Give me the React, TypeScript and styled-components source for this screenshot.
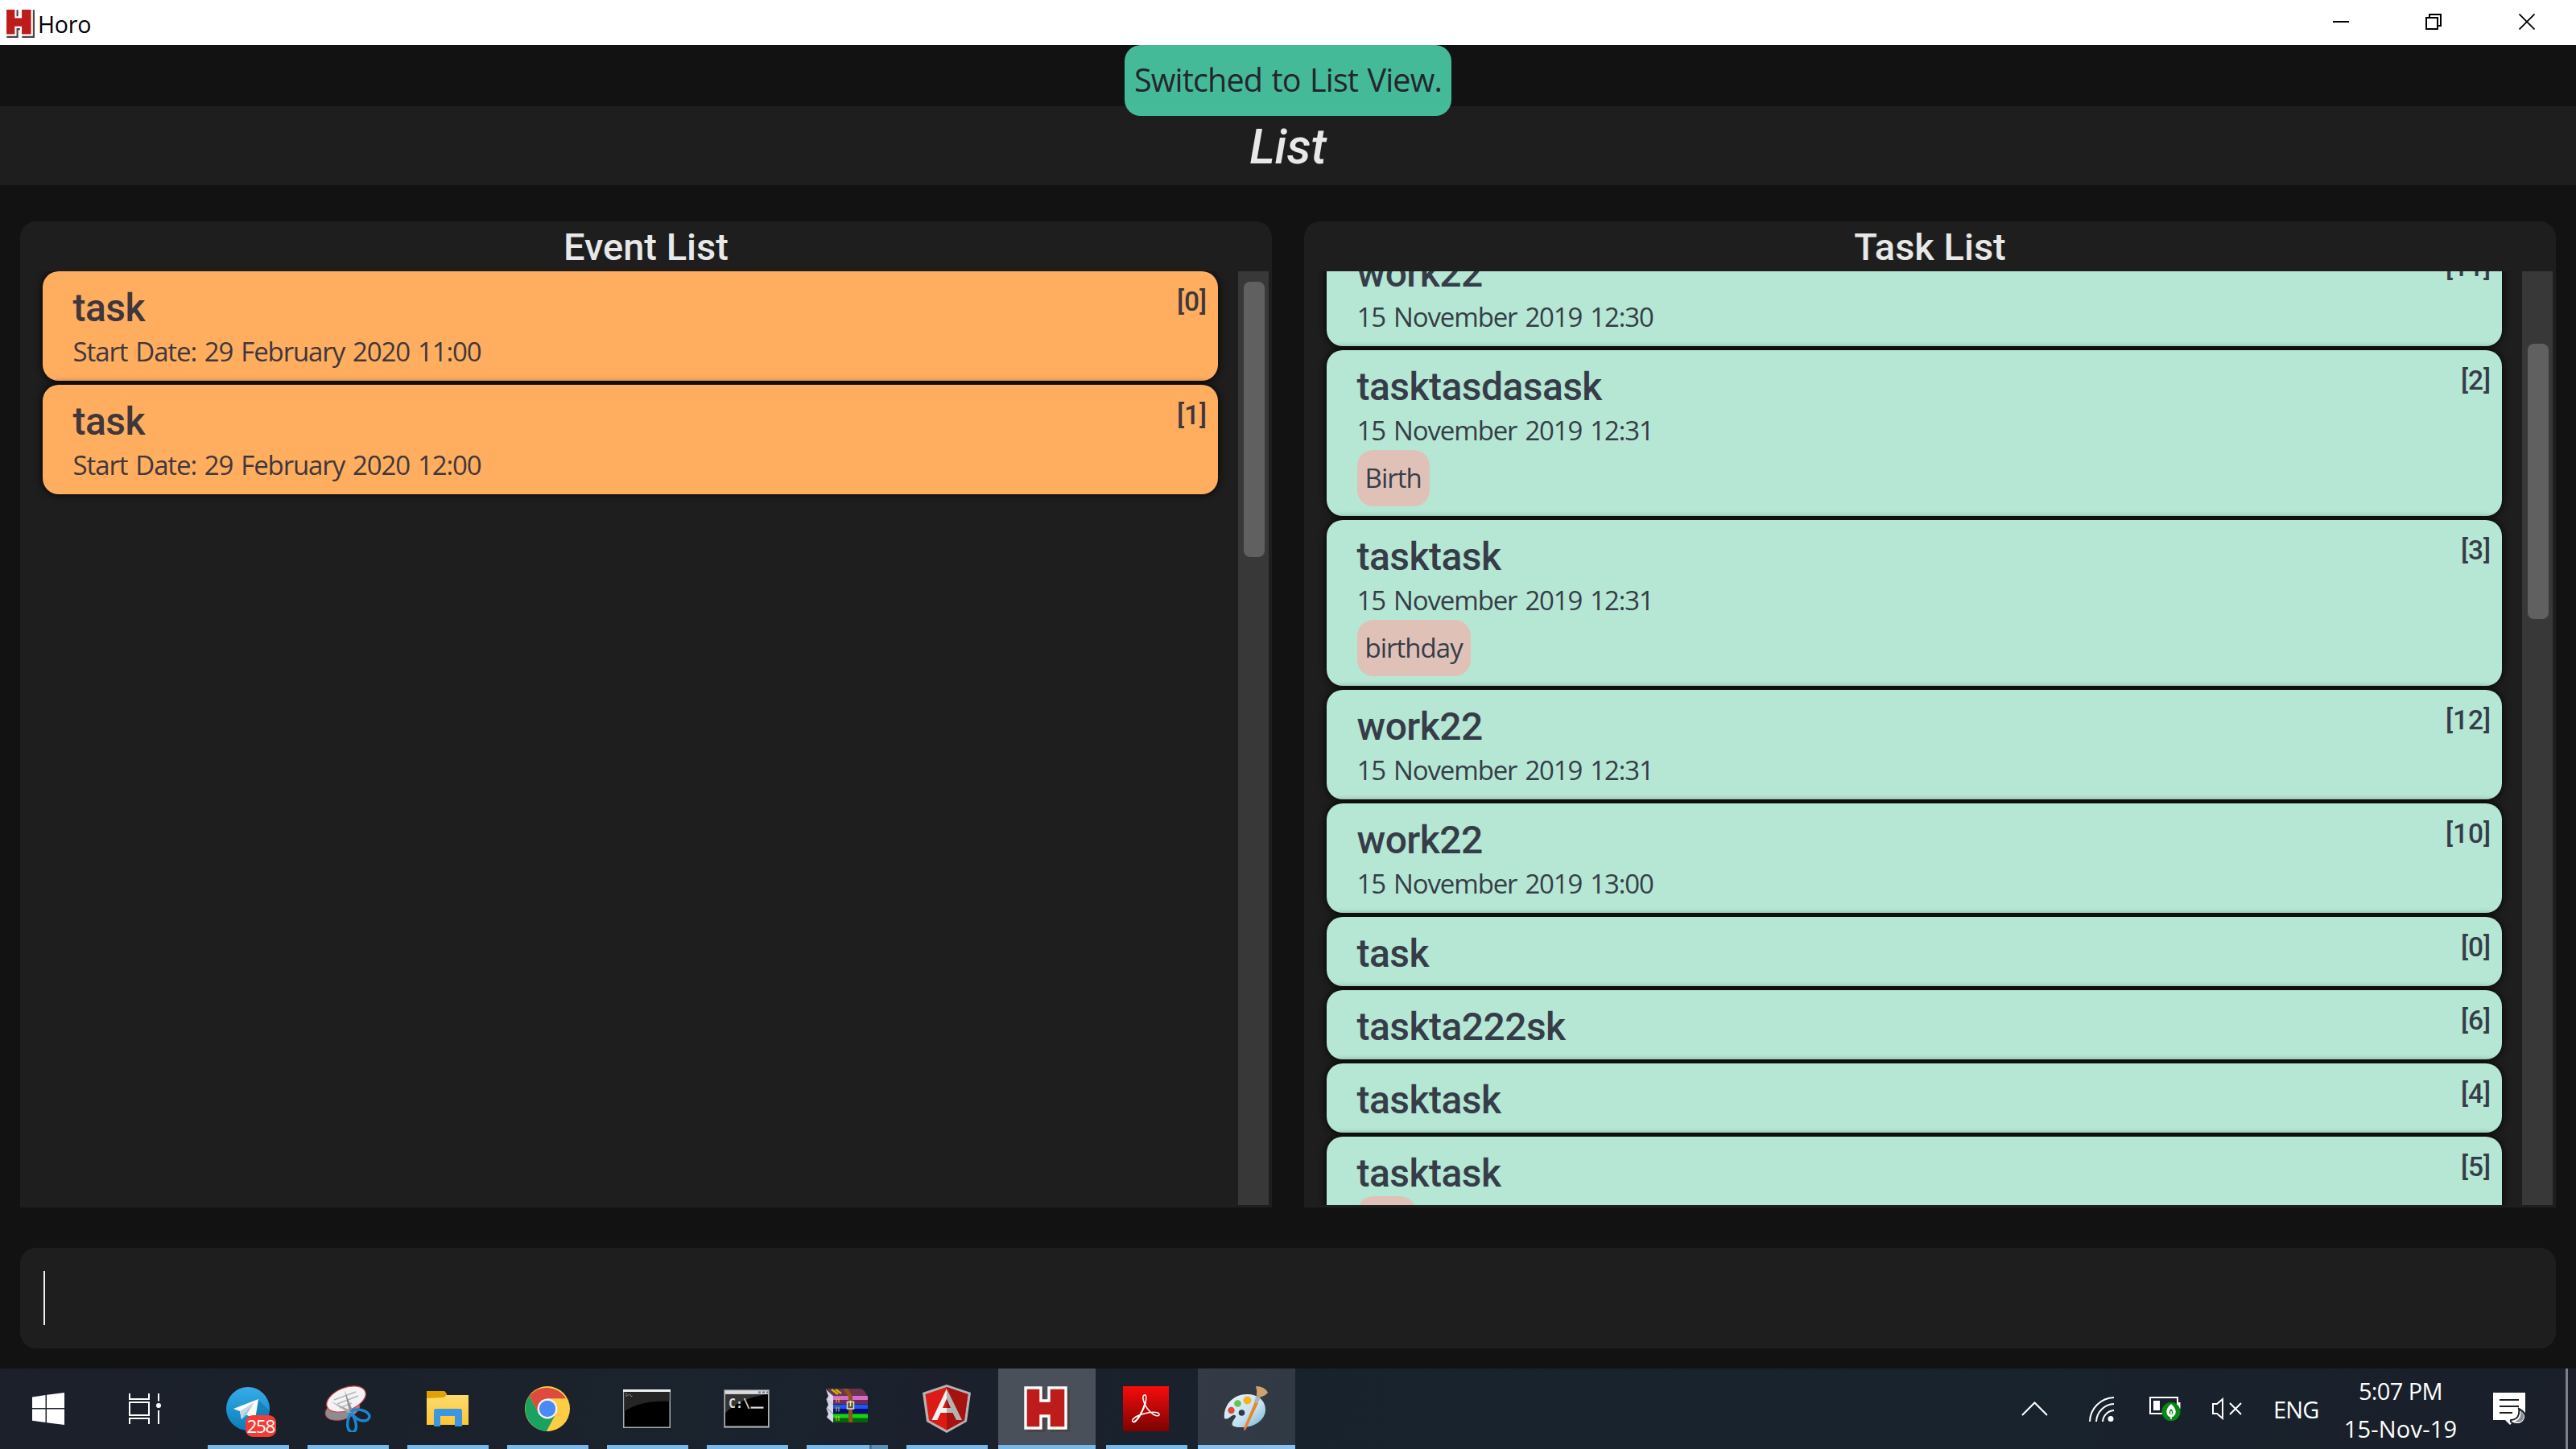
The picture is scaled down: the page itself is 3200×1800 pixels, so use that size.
import React from "react";
import styled, { createGlobalStyle } from "styled-components";

const ui = `"Open Sans", "Noto Sans", sans-serif`;
const heading = `Roboto, "Liberation Sans", sans-serif`;

const GlobalStyle = createGlobalStyle`
  html, body { margin: 0; padding: 0; background: #121212; }
  *, *::before, *::after { box-sizing: border-box; }
`;

const Screen = styled.div`
  width: 3200px;
  height: 1800px;
  display: flex;
  flex-direction: column;
  overflow: hidden;
  background: #121212;
  font-family: ${ui};
`;

const TitleBar = styled.header`
  position: relative;
  height: 56px;
  flex: none;
  display: flex;
  align-items: center;
  padding-left: 5px;
  background: #fff;
  color: #000;
`;

const AppName = styled.span`
  margin-left: 4px;
  padding-top: 3px;
  font-size: 28.5px;
  line-height: 40px;
  letter-spacing: -0.2px;
`;

const WindowButtons = styled.div`
  margin-left: auto;
  display: flex;
  height: 56px;
  padding: 0 2px 2px 0;
`;

const WindowButton = styled.span<{ $width: number }>`
  width: ${(p) => p.$width}px;
  display: flex;
  align-items: center;
  justify-content: center;
`;

const TopGap = styled.div`
  height: 76px;
  flex: none;
`;

const Toast = styled.div`
  position: absolute;
  top: 56px;
  left: 1397px;
  z-index: 2;
  width: 406px;
  height: 88px;
  border-radius: 20px;
  background: rgba(73, 199, 163, 0.93);
  color: #22262f;
  font-size: 39.5px;
  line-height: 87px;
  letter-spacing: -0.85px;
  word-spacing: 2px;
  text-align: center;
  white-space: nowrap;
`;

const ViewTitle = styled.h1`
  margin: 0;
  height: 98px;
  flex: none;
  background: #1e1e1e;
  color: #e8e8e8;
  font: italic 500 60px/101px ${heading};
  text-align: center;
`;

const Panels = styled.main`
  display: flex;
  gap: 40px;
  padding: 45px 25px 0;
`;

const Panel = styled.section`
  width: 1555px;
  height: 1225px;
  display: flex;
  flex-direction: column;
  border-radius: 20px 20px 0 0;
  background: #1e1e1e;
`;

const PanelTitle = styled.h2`
  margin: 0;
  height: 62px;
  flex: none;
  color: #e8e8e8;
  font: 500 47px/63px ${heading};
  text-align: center;
`;

const PanelBody = styled.div`
  height: 1160px;
  display: flex;
`;

const CardList = styled.div<{ $scrolled: boolean }>`
  width: 1513px;
  height: 1160px;
  padding-left: 27.6px;
  display: flex;
  flex-direction: column;
  gap: 5px;
  overflow: hidden;
  & > :first-child { margin-top: ${(p) => (p.$scrolled ? "-43px" : "0.4px")}; }
`;

const Card = styled.article<{ $tone: "event" | "task" }>`
  flex: none;
  width: 1460.6px;
  display: flex;
  justify-content: space-between;
  padding: 16px 14px 10px 38px;
  border-radius: 20px;
  background: ${(p) => (p.$tone === "event" ? "#ffae60" : "#b5e7d4")};
  color: ${(p) => (p.$tone === "event" ? "#3f373b" : "#363d48")};
  box-shadow: 0 0 10px 1px rgba(0, 0, 0, 0.75);
`;

const CardTitle = styled.h3`
  margin: 0;
  font: 500 48px/60px ${heading};
  letter-spacing: -0.55px;
`;

const CardDate = styled.p`
  margin: 0;
  height: 50px;
  font-size: 33px;
  line-height: 48px;
  letter-spacing: -1.13px;
  word-spacing: 2.5px;
`;

const Tag = styled.span`
  display: block;
  width: max-content;
  height: 70px;
  margin: -2px 0 2px;
  padding: 0 10px;
  border-radius: 20px;
  background: #e0c1b8;
  font-size: 33px;
  line-height: 70px;
  letter-spacing: -1px;
`;

const CardIndex = styled.span`
  margin-top: 2px;
  font: 500 33.5px/40px ${heading};
`;

const Track = styled.div<{ $offset: number }>`
  width: 38px;
  height: 1160px;
  padding: ${(p) => p.$offset}px 5px 0 7px;
  background: #383838;
`;

const Thumb = styled.div`
  height: 342px;
  border-radius: 8px;
  background: #606060;
`;

const CommandBox = styled.div`
  height: 125px;
  flex: none;
  margin: 50px 25px 25px;
  padding: 29px 29px;
  border-radius: 20px;
  background: #1e1e1e;
`;

const Caret = styled.div`
  width: 2px;
  height: 67px;
  background: #f0f0f0;
`;

const Taskbar = styled.footer`
  height: 100px;
  flex: none;
  display: flex;
  background: linear-gradient(100deg, #1b202a 0%, #1b212b 15%, #1a232d 30%, #1b202c 36%, #18222c 48%, #18232d 75%, #1a1f2a 100%);
  color: #fff;
`;

const SystemButton = styled.div<{ $width: number }>`
  width: ${(p) => p.$width}px;
  display: flex;
  align-items: center;
  justify-content: center;
`;

const Apps = styled.div`
  display: flex;
  gap: 3px;
  margin-left: 8px;
`;

const AppButton = styled.div<{ $bg?: string; $wide?: boolean; $line?: string }>`
  position: relative;
  width: 121px;
  height: 100px;
  display: flex;
  align-items: center;
  justify-content: center;
  padding-right: 2px;
  background: ${(p) => p.$bg ?? "transparent"};
  &::after {
    content: "";
    position: absolute;
    bottom: 0;
    left: ${(p) => (p.$wide ? 0 : 10)}px;
    right: ${(p) => (p.$wide ? 0 : 10)}px;
    height: 5px;
    background: ${(p) => p.$line ?? "#76b9ed"};
  }
`;

const Badge = styled.span`
  position: absolute;
  left: 56.5px;
  top: 57.5px;
  width: 38.5px;
  height: 27.5px;
  border-radius: 9px;
  background: #f33c36;
  color: #fff;
  font: 400 22.5px/28px ${ui};
  letter-spacing: -1.3px;
  text-align: center;
`;

const Prompt = styled.text`
  font: 700 15px "DejaVu Sans Mono", "Liberation Mono", monospace;
  fill: #dcdcdc;
`;

const Tray = styled.div`
  margin-left: auto;
  display: flex;
  align-items: center;
`;

const TrayIcon = styled.span<{ $before: number }>`
  display: flex;
  margin-left: ${(p) => p.$before}px;
`;

const Language = styled.span`
  width: 60px;
  margin-left: 39px;
  font-size: 29px;
  line-height: 40px;
  letter-spacing: -0.9px;
  padding-top: 2px;
`;

const Clock = styled.div`
  width: 152px;
  margin-left: 22px;
  padding-top: 2px;
  display: flex;
  flex-direction: column;
  align-items: center;
  font-size: 29px;
  line-height: 47px;
  white-space: nowrap;
`;

const ClockLine = styled.span<{ $spacing: number }>`
  letter-spacing: ${(p) => p.$spacing}px;
`;

const ShowDesktop = styled.div`
  width: 13px;
  height: 100px;
  margin-left: 48px;
  border-left: 3px solid #7b8187;
`;

function HoroLogo({ size, shadow }: { size: number; shadow: string }) {
  const h = "M3 3H22V19H32V3H53V53H32V38H22V53H3Z";
  return (
    <svg width={size} height={size} viewBox="0 0 58 58">
      <path d={h} transform="translate(3.5 3.5)" fill={shadow} stroke={shadow} strokeWidth="3" />
      <path d={h} fill="#be1b1b" stroke="#fff" strokeWidth="3.4" />
    </svg>
  );
}

function TelegramIcon() {
  return (
    <svg width="56" height="56" viewBox="0 0 56 56">
      <defs>
        <linearGradient id="tg" x1="0" y1="0" x2="0" y2="1">
          <stop offset="0" stopColor="#36ade8" />
          <stop offset="1" stopColor="#0a7dbb" />
        </linearGradient>
      </defs>
      <circle cx="28" cy="28" r="27" fill="url(#tg)" />
      <path d="M41 17L55 31Q53 45 42 51L27 36Z" fill="#0b74ad" opacity="0.55" />
      <path d="M10 28L41 16L37 41L25 35L20 41L18 31Z" fill="#fff" />
      <path d="M18 31L36 20L23 34L20 41Z" fill="#c3d9ea" />
      <path d="M23 34L36 20L26 36L20 41Z" fill="#a5c6df" />
    </svg>
  );
}

function SnipIcon() {
  return (
    <svg width="58" height="58" viewBox="0 0 58 58">
      <ellipse cx="22.5" cy="30" rx="22" ry="12" transform="rotate(-18 22.5 30)" fill="#8b8d92" stroke="#c74b4e" strokeWidth="1" />
      <ellipse cx="27" cy="17" rx="25.5" ry="14" transform="rotate(-22 27 17)" fill="#f3f3f5" stroke="#d0474c" strokeWidth="1.2" />
      <path d="M12 18L39 8M16 23L42 13M19 28L34 22" stroke="#b6b6ba" strokeWidth="1.4" />
      <path d="M8 20L35 32L33 36Z" fill="#a9abb2" />
      <path d="M25 6L35 31L31 33Z" fill="#8f9299" />
      <path d="M33 33C39 27 54 31 56 38C56 46 43 47 34 35C41 46 41 57 35 58C27 57 27 44 33 34" fill="none" stroke="#1a87d4" strokeWidth="3.4" />
    </svg>
  );
}

function FolderIcon() {
  return (
    <svg width="54" height="46" viewBox="0 0 54 46">
      <defs>
        <linearGradient id="fd" x1="0" y1="0" x2="0" y2="1">
          <stop offset="0" stopColor="#ffdc75" />
          <stop offset="1" stopColor="#fcc737" />
        </linearGradient>
      </defs>
      <path d="M1 9V2Q1 1 2 1H22Q24 1 26 6H53V43H1Z" fill="url(#fd)" />
      <path d="M1 10V2Q1 1 2 1H22Q24 1 26 5Q24 9 21 9Z" fill="#e3a005" />
      <path d="M10 45V26Q10 23 13 23H42Q45 23 45 26V45H36V32H18V45Z" fill="#3d97df" />
    </svg>
  );
}

function ChromeIcon() {
  return (
    <svg width="56" height="56" viewBox="0 0 56 56">
      <circle cx="28" cy="28" r="28" fill="#fdcd43" />
      <path d="M5.5 12A28 28 0 0 1 51.2 15.6H28L17.3 34.2Z" fill="#dc4b3e" />
      <path d="M5.5 12A28 28 0 0 0 27 56L38.7 34.2L17.3 34.2Z" fill="#1ba261" />
      <path d="M28 15.6H51.2A28 28 0 0 1 27 56L38.7 34.2Z" fill="#fdcd43" />
      <circle cx="28" cy="28" r="12.4" fill="#f3f3f3" />
      <circle cx="28" cy="28" r="10.2" fill="#4a8af4" />
    </svg>
  );
}

function ConsoleIcon({ large }: { large?: boolean }) {
  return large ? (
    <svg width="57" height="48" viewBox="0 0 57 48">
      <rect x="0.5" y="0.5" width="56" height="47" fill="#b5b7bb" stroke="#77797d" />
      <rect x="2" y="1.5" width="53" height="4" fill="#d9dbe0" />
      <path d="M43 3.5h3M48 3.5h3M53 3.5h2" stroke="#5d6a85" strokeWidth="2" />
      <rect x="2" y="6" width="53" height="39.5" fill="#000" />
      <path d="M2 6H55Q22 10 2 29Z" fill="#343434" />
      <Prompt x="6" y="23">C:\</Prompt>
      <rect x="33.5" y="21.5" width="16" height="2.2" fill="#dcdcdc" />
    </svg>
  ) : (
    <svg width="59" height="48" viewBox="0 0 59 48">
      <rect width="59" height="48" fill="#a9adb1" />
      <rect width="59" height="3" fill="#eef1f3" />
      <rect x="1.5" y="3" width="56" height="43.5" fill="#000" />
      <path d="M1.5 3H57.5V15Q22 13 1.5 27.5Z" fill="#252525" />
      <path d="M3 5.5h2M3 8h2M6 6v2M8 5.5l2 3M10 8.5h1.5" stroke="#aaa" strokeWidth="0.8" />
    </svg>
  );
}

function BooksIcon() {
  const rows = [
    { y: 9, a: "#d66bc8", b: "#6c2b60" },
    { y: 20, a: "#1c55f0", b: "#0c0c70" },
    { y: 31.5, a: "#12d512", b: "#0b5f0f" },
  ];
  return (
    <svg width="52" height="43" viewBox="0 0 52 43" style={{ marginBottom: 8 }}>
      <path d="M0 0H43Q49 2 51 9H9Z" fill="#6d3350" />
      <path d="M7 1L15 7M12 1L19 6" stroke="#c8b800" strokeWidth="2.4" />
      {rows.map((r) => (
        <g key={r.y}>
          <path d={`M0 ${r.y - 8}L9 ${r.y}V${r.y + 11}L1 ${r.y + 4}L3 ${r.y}Z`} fill="#d9d7ea" />
          <rect x="9" y={r.y} width="43" height="5.5" fill={r.a} />
          <rect x="9" y={r.y + 5} width="43" height="5.5" fill={r.b} />
          <path d={`M13 ${r.y + 2.5}v6M16 ${r.y + 2.5}v6`} stroke="#e5d32a" strokeWidth="1" />
        </g>
      ))}
      <path d="M21 0H27L33 9V42H28V10Z" fill="#8a5716" />
      <rect x="26.5" y="16.5" width="8" height="8.5" fill="#6b5326" stroke="#d8d8d8" strokeWidth="1.6" />
      <path d="M30.5 15V22" stroke="#e6e6e6" strokeWidth="1.4" />
    </svg>
  );
}

function AngularIcon() {
  return (
    <svg width="60" height="60" viewBox="0 0 60 60">
      <path d="M30 0L60 10L55 46L30 60L5 46L0 10Z" fill="#b3b3b3" />
      <path d="M30 3L56.5 12L52 44.5L30 56.5L8 44.5L3.5 12Z" fill="#dd1b16" />
      <path d="M30 3L56.5 12L52 44.5L30 56.5Z" fill="#a6120d" />
      <path d="M30 5L11.5 44H18.5L22.5 35H30V29H25L30 17.5Z" fill="#f2f2f2" />
      <path d="M30 5L49 44H42L37.5 35H30V29H35L30 17.5Z" fill="#b3b3b3" />
    </svg>
  );
}

function AcrobatIcon() {
  return (
    <svg width="57" height="56" viewBox="0 0 57 56">
      <defs>
        <linearGradient id="pdf" x1="0" y1="0" x2="0" y2="1">
          <stop offset="0" stopColor="#f80c0c" />
          <stop offset="1" stopColor="#7c0202" />
        </linearGradient>
      </defs>
      <rect width="57" height="56" fill="url(#pdf)" />
      <path
        d="M26.5 11C29 10 29.500 14 28 20C25 31 18 43 13.500 44.500C10.500 44.500 11 41 16 38C23 34 37 31 43 33C47 35 45 37.500 41 36.500C35 34.500 27 26 25 16C24.500 13 25 11.500 26.500 11Z"
        fill="none"
        stroke="#fff"
        strokeWidth="1.5"
      />
      <path d="M28 20C25 31 18 43 13.5 44.5" fill="none" stroke="#fff" strokeWidth="2.2" />
    </svg>
  );
}

function PaintIcon() {
  return (
    <svg width="56" height="56" viewBox="0 0 56 56">
      <defs>
        <linearGradient id="pal" x1="0" y1="0" x2="1" y2="1">
          <stop offset="0" stopColor="#eaf5fc" />
          <stop offset="0.6" stopColor="#c4e1f1" />
          <stop offset="1" stopColor="#6fb0d4" />
        </linearGradient>
      </defs>
      <path d="M1 40C-1 25 11 10 29 10C43 10 52 18 52 29C52 42 38 51 24 51C14 51 9 50 11 45C13 40 17 38 14 36C10 34 6 43 1 40Z" fill="url(#pal)" />
      <circle cx="22.5" cy="33" r="3.8" fill="#303a47" />
      <circle cx="9.5" cy="30" r="4.2" fill="#e2473a" />
      <circle cx="17.5" cy="21.5" r="4.3" fill="#6cc04d" />
      <circle cx="29.5" cy="17.5" r="5" fill="#fbb11d" />
      <path d="M39 19L43 21L27.5 54L25 55L25.5 51Z" fill="#e8862a" />
      <path d="M41 11L46 14L42 21.5L38 19.5Z" fill="#a9b3ba" />
      <path d="M40 0Q51 0 55 8Q52 12 45.5 13.5L41 11Q42 6 40 0Z" fill="#cfa26d" />
    </svg>
  );
}

type Item = { name: string; index: number; date?: string; tag?: string };

const events: Item[] = [
  { name: "task", index: 0, date: "Start Date: 29 February 2020 11:00" },
  { name: "task", index: 1, date: "Start Date: 29 February 2020 12:00" },
];

const tasks: Item[] = [
  { name: "work22", index: 11, date: "15 November 2019 12:30" },
  { name: "tasktasdasask", index: 2, date: "15 November 2019 12:31", tag: "Birth" },
  { name: "tasktask", index: 3, date: "15 November 2019 12:31", tag: "birthday" },
  { name: "work22", index: 12, date: "15 November 2019 12:31" },
  { name: "work22", index: 10, date: "15 November 2019 13:00" },
  { name: "task", index: 0 },
  { name: "taskta222sk", index: 6 },
  { name: "tasktask", index: 4 },
  { name: "tasktask", index: 5, tag: "456" },
];

function ListPanel({ title, tone, items, thumb }: { title: string; tone: "event" | "task"; items: Item[]; thumb: number }) {
  return (
    <Panel>
      <PanelTitle>{title}</PanelTitle>
      <PanelBody>
        <CardList $scrolled={tone === "task"}>
          {items.map((item) => (
            <Card key={item.index} $tone={tone}>
              <div>
                <CardTitle>{item.name}</CardTitle>
                {item.date && <CardDate>{item.date}</CardDate>}
                {item.tag && <Tag>{item.tag}</Tag>}
              </div>
              <CardIndex>[{item.index}]</CardIndex>
            </Card>
          ))}
        </CardList>
        <Track $offset={thumb}>
          <Thumb />
        </Track>
      </PanelBody>
    </Panel>
  );
}

export default function App() {
  return (
    <Screen>
      <GlobalStyle />
      <TitleBar>
        <HoroLogo size={38} shadow="#4d4444" />
        <AppName>Horo</AppName>
        <WindowButtons>
          <WindowButton $width={115}>
            <svg width="20" height="20"><path d="M0 10H20" stroke="#000" strokeWidth="2" /></svg>
          </WindowButton>
          <WindowButton $width={115}>
            <svg width="20" height="20" fill="none" stroke="#000" strokeWidth="2">
              <path d="M1 5H15V19H1ZM5 5V1H19V15H15" />
            </svg>
          </WindowButton>
          <WindowButton $width={118}>
            <svg width="20" height="20"><path d="M0.5 0.5L19.5 19.5M19.5 0.5L0.5 19.5" stroke="#000" strokeWidth="1.8" /></svg>
          </WindowButton>
        </WindowButtons>
      </TitleBar>
      <Toast>Switched to List View.</Toast>
      <TopGap />
      <ViewTitle>List</ViewTitle>
      <Panels>
        <ListPanel title="Event List" tone="event" items={events} thumb={13} />
        <ListPanel title="Task List" tone="task" items={tasks} thumb={90} />
      </Panels>
      <CommandBox>
        <Caret />
      </CommandBox>
      <Taskbar>
        <SystemButton $width={120}>
          <svg width="40" height="40" fill="#fff">
            <path d="M0 5.5L16.5 3V19H0ZM18 2.7L40 0V19H18ZM0 20.5H16.5V37L0 34.7ZM18 20.5H40V40L18 37.3Z" />
          </svg>
        </SystemButton>
        <SystemButton $width={120}>
          <svg width="40" height="38" fill="none" stroke="#fff" strokeWidth="2">
            <path d="M1 0V7H25V0M1 11H25V27H1ZM1 38V31H25V38M37 0V9.5M37 21V38" />
            <circle cx="37" cy="15" r="3" fill="#fff" stroke="none" />
          </svg>
        </SystemButton>
        <Apps>
          <AppButton><TelegramIcon /><Badge>258</Badge></AppButton>
          <AppButton><SnipIcon /></AppButton>
          <AppButton><FolderIcon /></AppButton>
          <AppButton><ChromeIcon /></AppButton>
          <AppButton><ConsoleIcon /></AppButton>
          <AppButton><ConsoleIcon large /></AppButton>
          <AppButton $line="linear-gradient(90deg, #76b9ed 78px, #466e8f 78px, #466e8f 81px, #5a8fb9 81px)"><BooksIcon /></AppButton>
          <AppButton><AngularIcon /></AppButton>
          <AppButton $bg="#495059" $wide><HoroLogo size={58} shadow="#4b4443" /></AppButton>
          <AppButton><AcrobatIcon /></AppButton>
          <AppButton $bg="linear-gradient(100deg, #343a46, #303a44)" $wide $line="#85c2f2"><PaintIcon /></AppButton>
        </Apps>
        <Tray>
          <TrayIcon $before={0}>
            <svg width="33" height="18" fill="none" stroke="#fff" strokeWidth="2"><path d="M1 17L16.5 1.5L32 17" /></svg>
          </TrayIcon>
          <TrayIcon $before={51}>
            <svg width="31" height="32" fill="none" stroke="#fff" strokeWidth="2">
              <path d="M1 32A31 31 0 0 1 31 2M9 32A23 23 0 0 1 31 10M17 32A15 15 0 0 1 31 18" />
              <circle cx="27" cy="28.5" r="3.5" fill="#fff" stroke="none" />
            </svg>
          </TrayIcon>
          <TrayIcon $before={44}>
            <svg width="39" height="30" viewBox="0 0 39 30">
              <path d="M1 1H35V21H1Z" fill="none" stroke="#fff" strokeWidth="2" />
              <rect x="5" y="5" width="8" height="12" fill="#fff" />
              <rect x="36" y="7" width="2.5" height="8" fill="#fff" />
              <circle cx="27" cy="18.5" r="11.5" fill="#058a16" />
              <path d="M27 9Q34 15 32.5 21Q31 25 27 25.5Q23 25 21.5 21Q20 15 27 9Z" fill="#fff" />
              <path d="M27 15Q30 18 29 21Q28 23 27 23Q26 23 25 21Q24 18 27 15Z" fill="#058a16" />
              <path d="M27 18V28" stroke="#fff" strokeWidth="1.6" />
            </svg>
          </TrayIcon>
          <TrayIcon $before={39}>
            <svg width="37" height="28" fill="none" stroke="#fff" strokeWidth="2">
              <path d="M1 8H6L13 2V26L6 20H1ZM22 7L36 21M36 7L22 21" />
            </svg>
          </TrayIcon>
          <Language>ENG</Language>
          <Clock>
            <ClockLine $spacing={-0.6}>5:07 PM</ClockLine>
            <ClockLine $spacing={0.2}>15-Nov-19</ClockLine>
          </Clock>
          <TrayIcon $before={39}>
            <svg width="42" height="41" viewBox="0 0 42 41">
              <path d="M0 0H40V34H27L21 40L15 34H0Z" fill="#fff" />
              <path d="M8 9H32M8 17H32M8 25H24" stroke="#1a202b" strokeWidth="2.2" />
              <path d="M32 20Q42 25 39.5 33Q36 41 26 38.5Q21 37 22 34Q34 33 32 20Z" fill="#fff" stroke="#1a202b" strokeWidth="2" />
              <path d="M34 22Q40 28 37.5 33Q34 38 26 36.5Q36 33 34 22Z" fill="#1a202b" opacity="0.5" />
            </svg>
          </TrayIcon>
          <ShowDesktop />
        </Tray>
      </Taskbar>
    </Screen>
  );
}
